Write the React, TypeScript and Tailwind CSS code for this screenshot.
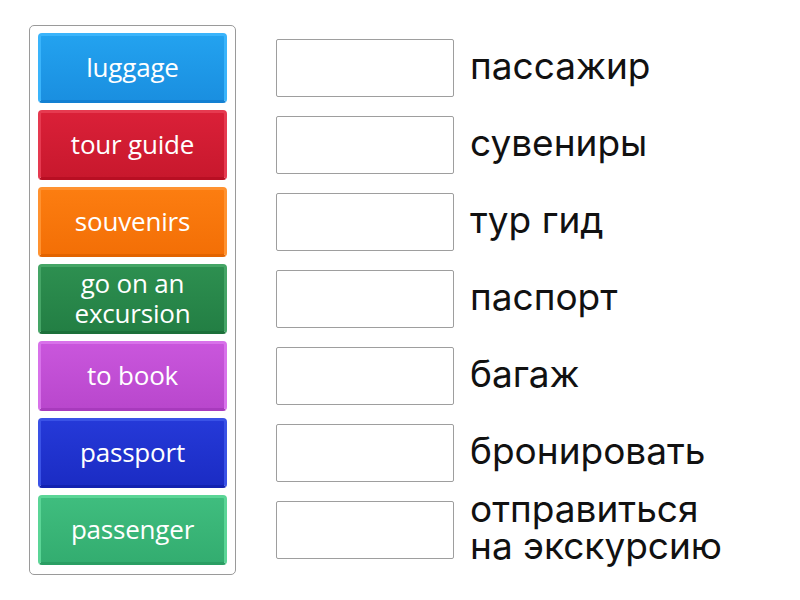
// Сопоставление: слова слева, пустые ячейки и переводы справа
const TILES = [
  { label: "luggage", cls: "bg-gradient-to-b from-[#23a2ef] to-[#1a8fe0] border-[#3ab4fb] border-b-[#1380d2]" },
  { label: "tour guide", cls: "bg-gradient-to-b from-[#da2038] to-[#c8182d] border-[#e63a50] border-b-[#b80f23]" },
  { label: "souvenirs", cls: "bg-gradient-to-b from-[#fc7d10] to-[#f36f06] border-[#ff9230] border-b-[#e26300]" },
  { label: "go on an excursion", cls: "bg-gradient-to-b from-[#2d8f50] to-[#237f44] border-[#45a566] border-b-[#1c703a]" },
  { label: "to book", cls: "bg-gradient-to-b from-[#c956dc] to-[#b947cd] border-[#d872ea] border-b-[#a83bbd]" },
  { label: "passport", cls: "bg-gradient-to-b from-[#2539d8] to-[#1b2cc4] border-[#3a52e6] border-b-[#1322b0]" },
  { label: "passenger", cls: "bg-gradient-to-b from-[#3fbd7e] to-[#33ad70] border-[#5bd596] border-b-[#2a9e63]" },
];

const WORDS = [
  "пассажир",
  "сувениры",
  "тур гид",
  "паспорт",
  "багаж",
  "бронировать",
  "отправиться на экскурсию",
];

function Tile({ label, cls }: { label: string; cls: string }) {
  return (
    <div
      className={`flex h-[70px] w-[189px] items-center justify-center rounded-[4px] border-[3px] px-3 pb-[3px] text-center text-[26px] font-medium leading-[30px] tracking-[-0.2px] text-white ${cls}`}
      style={{ fontFamily: "'Open Sans', Lato, sans-serif" }}
    >
      <span className="max-w-[150px]">{label}</span>
    </div>
  );
}

export default function App() {
  return (
    <div className="h-[600px] w-[800px] bg-white" style={{ fontFamily: "Inter, 'Noto Sans', sans-serif" }}>
      <div className="flex pl-[29px] pt-[25px]">
        {/* колонка с плитками */}
        <div className="flex flex-col gap-[7px] rounded-[5px] border border-[#9a9a9a] px-[8px] pb-[9px] pt-[7px]">
          {TILES.map((t) => (
            <Tile key={t.label} label={t.label} cls={t.cls} />
          ))}
        </div>

        {/* ячейки и переводы */}
        <div className="ml-[40px] flex flex-col gap-[7px] pt-[8px]">
          {WORDS.map((w) => (
            <div key={w} className="flex h-[70px] items-center">
              <div className="h-[58px] w-[178px] rounded-[2px] border border-[#9e9e9e] bg-white" />
              <div className="mb-[6px] ml-[16px] max-w-[270px] text-[37px] leading-[37px] text-[#111]">{w}</div>
            </div>
          ))}
        </div>
      </div>
    </div>
  );
}
